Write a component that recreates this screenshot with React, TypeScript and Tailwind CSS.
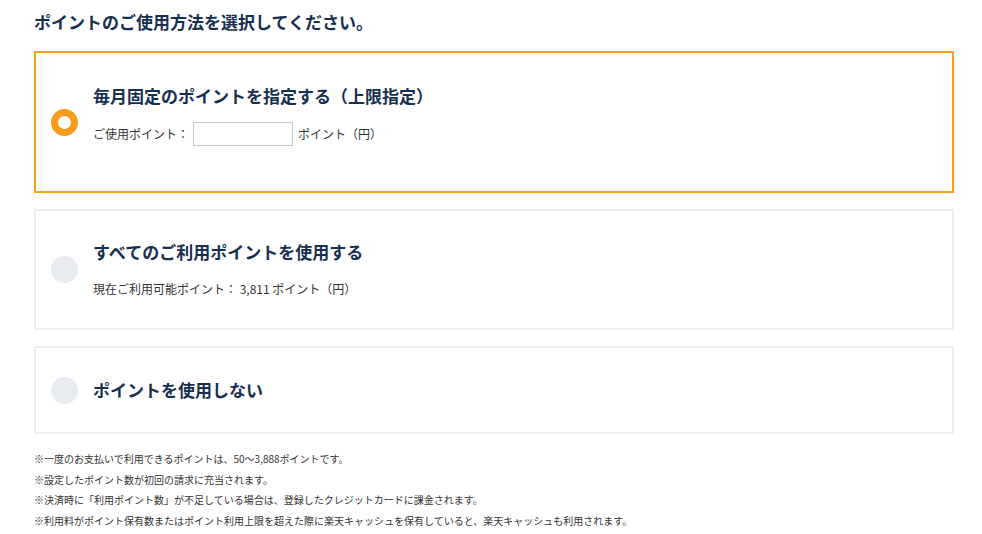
const font = "font-['Noto_Sans_CJK_JP','Noto_Sans',sans-serif]"

function Radio({ checked }: { checked?: boolean }) {
  return checked ? (
    <div className="w-[27px] h-[27px] rounded-full border-[7px] border-[#f89c1c] bg-white shrink-0" />
  ) : (
    <div className="w-[27px] h-[27px] rounded-full bg-[#e8ebef] shrink-0" />
  )
}

export default function App() {
  return (
    <div className={`${font} bg-white w-[982px] h-[534px] px-[34px] pt-[9px] text-[#333]`}>
      <h2 className="text-[17px] font-bold text-[#172f50] leading-[26px]">
        ポイントのご使用方法を選択してください。
      </h2>

      <div className="mt-[16px] w-[920px] flex flex-col gap-[16px]">
        {/* option 1 */}
        <label className="flex items-center h-[142px] border-2 border-[#f5a01f] pl-[15px]">
          <Radio checked />
          <div className="ml-[15px] mb-[14px] flex flex-col">
            <div className="text-[17px] font-bold text-[#172f50] leading-[24px]">
              毎月固定のポイントを指定する（上限指定）
            </div>
            <div className="mt-[14px] flex items-center text-[12px] leading-[24px]">
              <span>ご使用ポイント：</span>
              <input
                type="text"
                className="ml-[4px] w-[100px] h-[24px] border border-[#c8c8c8] outline-none"
              />
              <span className="ml-[5px]">ポイント（円）</span>
            </div>
          </div>
        </label>

        {/* option 2 */}
        <label className="flex items-center h-[121px] border-2 border-[#eceeef] pl-[15px]">
          <Radio />
          <div className="ml-[15px] flex flex-col">
            <div className="text-[17px] font-bold text-[#172f50] leading-[24px]">
              すべてのご利用ポイントを使用する
            </div>
            <div className="mt-[15px] text-[12px] leading-[20px]">
              現在ご利用可能ポイント： 3,811 ポイント（円）
            </div>
          </div>
        </label>

        {/* option 3 */}
        <label className="flex items-center h-[88px] border-2 border-[#eceeef] pl-[15px]">
          <Radio />
          <div className="ml-[15px] text-[17px] font-bold text-[#172f50] leading-[24px]">
            ポイントを使用しない
          </div>
        </label>
      </div>

      <ul className="mt-[15px] text-[10px] leading-[20.5px] text-[#333]">
        <li>※一度のお支払いで利用できるポイントは、50〜3,888ポイントです。</li>
        <li>※設定したポイント数が初回の請求に充当されます。</li>
        <li>※決済時に「利用ポイント数」が不足している場合は、登録したクレジットカードに課金されます。</li>
        <li>※利用料がポイント保有数またはポイント利用上限を超えた際に楽天キャッシュを保有していると、楽天キャッシュも利用されます。</li>
      </ul>
    </div>
  )
}
